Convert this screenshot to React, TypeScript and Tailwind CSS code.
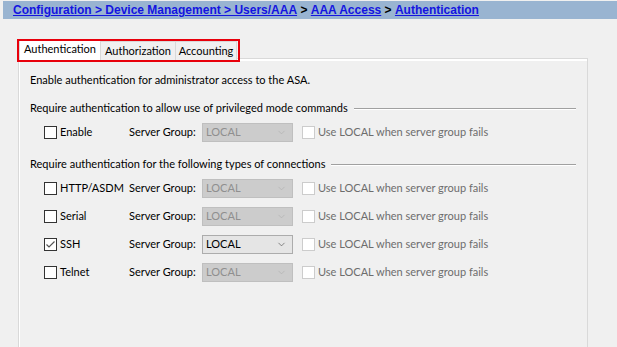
import { ChevronDown } from "lucide-react"

type Row = { label: string; checked: boolean; enabled: boolean }

const rows: Row[] = [
  { label: "HTTP/ASDM", checked: false, enabled: false },
  { label: "Serial", checked: false, enabled: false },
  { label: "SSH", checked: true, enabled: true },
  { label: "Telnet", checked: false, enabled: false },
]

const CheckBox = ({ checked, disabled }: { checked?: boolean; disabled?: boolean }) => (
  <div
    className={
      "w-[13px] h-[13px] shrink-0 bg-white border flex items-center justify-center " +
      (disabled ? "border-[#cccccc]" : "border-[#333333]")
    }
  >
    {checked && (
      <svg width="11" height="11" viewBox="0 0 11 11">
        <path d="M1.5 5.5 L4 8 L9.5 2.5" fill="none" stroke="#555555" strokeWidth="1.2" />
      </svg>
    )}
  </div>
)

const Select = ({ enabled }: { enabled: boolean }) => (
  <div
    className={
      "w-[91px] h-[19px] shrink-0 border flex items-center justify-between pl-[3px] pr-[5px] " +
      (enabled
        ? "bg-[#e5e5e5] border-[#acacac] text-black"
        : "bg-[#cccccc] border-[#bfbfbf] text-[#8f8f8f]")
    }
  >
    <span>LOCAL</span>
    <ChevronDown size={11} strokeWidth={1.2} className={enabled ? "text-[#333]" : "text-[#a8a8a8]"} />
  </div>
)

const ServerRow = ({ label, checked, enabled }: Row) => (
  <div className="h-[28px] flex items-center pl-[14px] whitespace-nowrap">
    <CheckBox checked={checked} />
    <span className="w-[72px] shrink-0 pl-[3px]">{label}</span>
    <span className="w-[73px] shrink-0">Server Group:</span>
    <Select enabled={enabled} />
    <div className="ml-[9px]">
      <CheckBox disabled />
    </div>
    <span className="ml-[3px] text-[#6d6d6d]">Use LOCAL when server group fails</span>
  </div>
)

const Heading = ({ text }: { text: string }) => (
  <div className="h-4 flex items-center whitespace-nowrap">
    <span>{text}</span>
    <div className="flex-1 ml-[6px] border-t border-[#a0a0a0] border-b-white border-b h-0 mt-[1px]"></div>
  </div>
)

const App = () => {
  return (
    <div className="w-[617px] h-[347px] overflow-hidden bg-[#f0f0f0] text-[11px] text-black font-['Lato',sans-serif]">
      <div className="mt-[1px] ml-[3px] h-[18px] bg-[#99b4d1] pl-[10px] flex items-center font-['Liberation_Sans',sans-serif] font-bold text-[12px] whitespace-pre">
        <span className="text-[#1414e0] underline">Configuration &gt; Device Management &gt; Users/AAA</span>
        <span> &gt; </span>
        <span className="text-[#1414e0] underline">AAA Access</span>
        <span> &gt; </span>
        <span className="text-[#1414e0] underline">Authentication</span>
      </div>

      <div className="relative mt-[20px] ml-[18px]">
        {/* tabs */}
        <div className="flex items-end h-[21px] pl-[1px] whitespace-nowrap">
          <div className="relative z-10 w-[82px] h-[21px] bg-white border border-b-0 border-[#d9d9d9] flex items-center justify-center pb-[2px]">
            Authentication
          </div>
          <div className="w-[75px] h-[19px] bg-[#f0f0f0] border border-l-0 border-b-0 border-[#d9d9d9] flex items-center justify-center pt-[1px]">
            Authorization
          </div>
          <div className="w-[61px] h-[19px] bg-[#f0f0f0] border border-l-0 border-b-0 border-[#d9d9d9] flex items-center justify-center pt-[1px]">
            Accounting
          </div>
        </div>
        <div className="absolute left-[-1px] top-0 w-[223px] h-[23px] border-2 border-[#e8000b] z-20"></div>

        {/* panel */}
        <div className="-mt-[2px] w-[570px] h-[300px] border border-[#d9d9d9] shadow-[inset_1px_2px_0_#ffffff] pl-[11px] pr-[11px] pt-[13px]">
          <div className="h-4 flex items-center whitespace-nowrap">Enable authentication for administrator access to the ASA.</div>

          <div className="mt-[12px]">
            <Heading text="Require authentication to allow use of privileged mode commands" />
          </div>
          <div className="mt-[2px]">
            <ServerRow label="Enable" checked={false} enabled={false} />
          </div>

          <div className="mt-[10px]">
            <Heading text="Require authentication for the following types of connections" />
          </div>
          <div className="mt-[2px]">
            {rows.map((r) => (
              <ServerRow key={r.label} {...r} />
            ))}
          </div>
        </div>
      </div>
    </div>
  )
}

export default App
